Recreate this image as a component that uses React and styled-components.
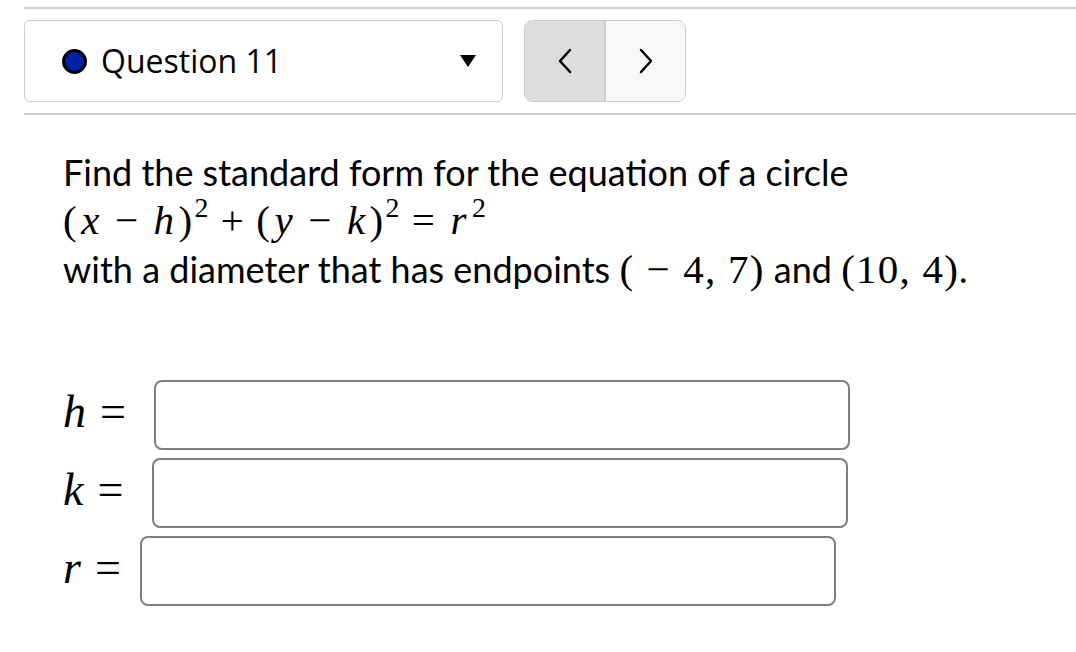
import React from "react";
import styled, { createGlobalStyle } from "styled-components";

const GlobalStyle = createGlobalStyle`
  body {
    margin: 0;
    background: #ffffff;
    font-family: "Open Sans", "Noto Sans", sans-serif;
    color: #000000;
  }
`;

const Page = styled.div`
  padding: 7px 0 0 24px;
`;

const Rule = styled.div`
  height: 2px;
  background: #cccccc;
`;

const Header = styled.div`
  display: flex;
  gap: 21px;
  padding: 11px 0 11px 0;
`;

const Dropdown = styled.div`
  box-sizing: border-box;
  width: 479px;
  height: 82px;
  border: 1px solid #cccccc;
  border-radius: 6px;
  display: flex;
  align-items: center;
  padding: 0 26px 0 37px;
`;

const Dot = styled.span`
  box-sizing: border-box;
  width: 25px;
  height: 25px;
  border-radius: 50%;
  border: 3px solid #000000;
  background: #0020a8;
  flex: none;
`;

const QuestionLabel = styled.span`
  flex: 1;
  margin-left: 14px;
  font-size: 32px;
  line-height: 1;
`;

const Caret = styled.span`
  width: 0;
  height: 0;
  border-left: 8px solid transparent;
  border-right: 8px solid transparent;
  border-top: 12px solid #000000;
`;

const Nav = styled.div`
  box-sizing: border-box;
  width: 162px;
  height: 82px;
  border: 1px solid #cccccc;
  border-radius: 8px;
  overflow: hidden;
  display: flex;
`;

const NavButton = styled.button`
  flex: 1;
  border: none;
  padding: 0;
  margin: 0;
  background: ${(p) => (p.$disabled ? "#dddddd" : "#f8f8f8")};
  border-right: ${(p) => (p.$divider ? "2px solid #cccccc" : "none")};
  display: flex;
  align-items: center;
  justify-content: center;
`;

const Content = styled.div`
  padding: 32px 0 0 39px;
`;

const Prompt = styled.div`
  font-family: "Lato", "Open Sans", sans-serif;
  font-size: 36px;
`;

const Line = styled.div`
  height: ${(p) => p.$h || 50}px;
  line-height: ${(p) => p.$h || 50}px;
  white-space: nowrap;
`;

const MathText = styled.span`
  font-family: "Liberation Serif", "DejaVu Serif", serif;
  font-size: 41px;
  letter-spacing: 0.03em;
`;

const V = styled.i`
  font-style: italic;
  padding: 0 0.08em;
`;

const Op = styled.span`
  margin: 0 ${(p) => p.$m || 0.27}em;
`;

const Sup = styled.sup`
  font-size: 0.68em;
  vertical-align: 0.6em;
  line-height: 0;
  padding-left: 0.04em;
`;

const Answers = styled.div`
  display: flex;
  flex-direction: column;
  gap: 8px;
  margin-top: 85px;
`;

const Row = styled.div`
  display: flex;
  align-items: center;
`;

const RowLabel = styled.span`
  font-family: "Liberation Serif", "DejaVu Serif", serif;
  font-size: 46px;
  line-height: 1;
  margin: 0 ${(p) => p.$gap}px 6px 0;
  white-space: nowrap;
`;

const LabelVar = styled.i`
  font-style: italic;
`;

const Eq = styled.span`
  margin-left: 14px;
`;

const Field = styled.input`
  box-sizing: border-box;
  width: 696px;
  height: 70px;
  border: 2px solid #808080;
  border-radius: 8px;
  background: #ffffff;
  outline: none;
  font-size: 24px;
`;

const Chevron = ({ dir }) => (
  <svg width="16" height="26" viewBox="0 0 16 26" fill="none">
    <polyline
      points={dir === "left" ? "13,2 3,13 13,24" : "3,2 13,13 3,24"}
      stroke="#000000"
      strokeWidth="2.5"
      strokeLinecap="round"
      strokeLinejoin="round"
    />
  </svg>
);

const answers = [
  { name: "h", gap: 28 },
  { name: "k", gap: 29 },
  { name: "r", gap: 19 },
];

export default function App() {
  return (
    <Page>
      <GlobalStyle />
      <Rule />
      <Header>
        <Dropdown>
          <Dot />
          <QuestionLabel>Question 11</QuestionLabel>
          <Caret />
        </Dropdown>
        <Nav>
          <NavButton $disabled $divider aria-label="Previous">
            <Chevron dir="left" />
          </NavButton>
          <NavButton aria-label="Next">
            <Chevron dir="right" />
          </NavButton>
        </Nav>
      </Header>
      <Rule />
      <Content>
        <Prompt>
          <Line $h={50}>Find the standard form for the equation of a circle</Line>
          <Line $h={46}>
            <MathText>
              (<V>x</V>
              <Op>−</Op>
              <V>h</V>)<Sup>2</Sup>
              <Op>+</Op>(<V>y</V>
              <Op>−</Op>
              <V>k</V>)<Sup>2</Sup>
              <Op>=</Op>
              <V>r</V>
              <Sup>2</Sup>
            </MathText>
          </Line>
          <Line $h={52}>
            with a diameter that has endpoints{" "}
            <MathText>
              (<Op $m={0.3}>−</Op>4, 7)
            </MathText>{" "}
            and <MathText>(10, 4)</MathText>.
          </Line>
        </Prompt>
        <Answers>
          {answers.map((a) => (
            <Row key={a.name}>
              <RowLabel $gap={a.gap}>
                <LabelVar>{a.name}</LabelVar>
                <Eq>=</Eq>
              </RowLabel>
              <Field type="text" aria-label={a.name} />
            </Row>
          ))}
        </Answers>
      </Content>
    </Page>
  );
}
